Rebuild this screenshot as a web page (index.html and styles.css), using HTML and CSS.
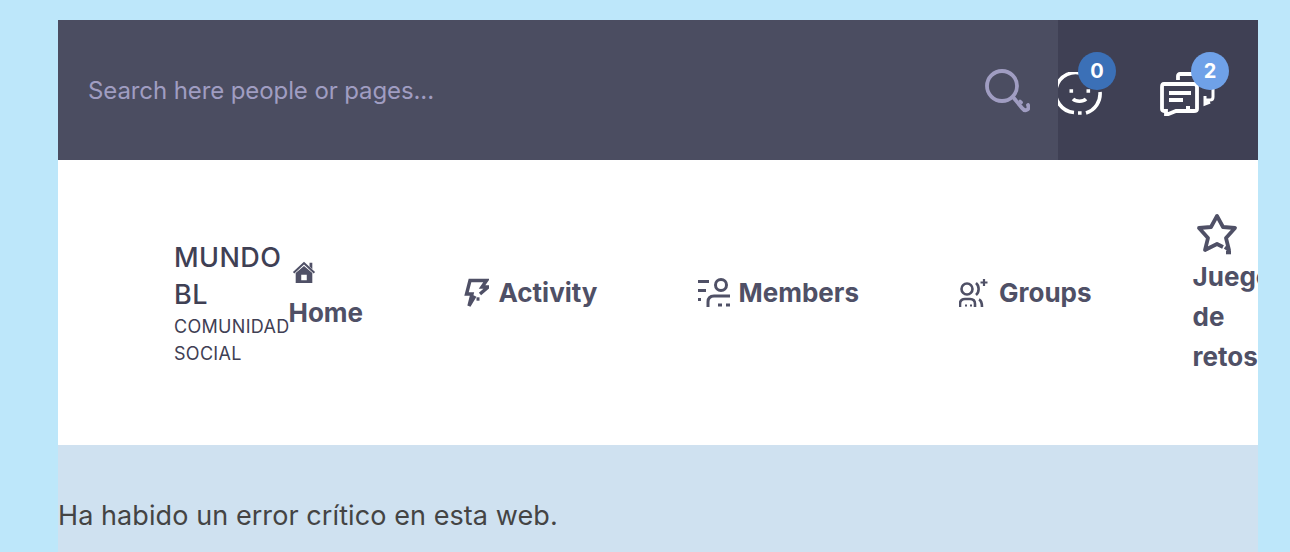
FILE: index.html
```html
<!doctype html>
<html>
<head>
<meta charset="UTF-8">
<title>Mundo BL</title>
<link rel="stylesheet" href="styles.css">
</head>

<body>
<div class="page">
  <header class="topbar">
    <div class="search">
      <span class="search-text">Search here people or pages...</span>
      <svg class="search-icon" width="45" height="46" viewBox="1 0 45 46" fill="none" stroke="#a09dc2" stroke-width="3.800" stroke-linecap="round">
        <circle cx="18" cy="17" r="15"/>
        <path d="M29 28 L38 39 C41 43 46 41 44 36"/>
        <path d="M36 32 L37.500 33.500" stroke-width="3"/>
      </svg>
    </div>
    <div class="actions">
      <div class="action action-friends">
        <svg width="44" height="44" viewBox="0 0 44 44" fill="none" stroke="#fff" stroke-width="3.600">
          <path d="M16 40.500 A20 20 0 1 1 26 2.400"/>
          <path d="M42 20 A20 20 0 0 1 28 41"/>
          <path d="M15 27 C18 30 25 30 28 27"/>
          <path d="M11.500 19 h3.600 M28.500 19 h3.600 M20 41 h3.600"/>
        </svg>
        <span class="badge badge-dark">0</span>
      </div>
      <div class="action action-chat">
        <svg width="56" height="44" viewBox="0 0 56 44" fill="none" stroke="#fff" stroke-width="3.800">
          <path d="M18 8 V4 Q18 2 20 2 H34"/>
          <path d="M53 16 V25 Q53 28 50 28 H46 M45 24 V32 L50 30" stroke-width="3"/>
          <path d="M4 12 H34 Q37 12 37 15 V37 Q37 39 34 39 H16 L6 43 V39 H4 Q2 39 2 37 V15 Q2 12 4 12 Z" fill="#3f4054"/>
          <path d="M9 21 H31 M9 28 H23 M26 36 H30"/>
        </svg>
        <span class="badge badge-light">2</span>
      </div>
    </div>
  </header>

  <nav class="navbar">
    <div class="logo">
      <div class="logo-name">MUNDO BL</div>
      <div class="logo-sub">COMUNIDAD SOCIAL</div>
    </div>
    <ul class="menu">
      <li class="menu-item item-home">
        <svg class="home-icon" width="24" height="24" viewBox="0 0 26 26" fill="#4f5066">
          <path d="M13 2 L25 13 L23.500 14.500 L13 5 L2.500 14.500 L1 13 Z"/>
          <path d="M19 3 H22 V10 L19 7 Z"/>
          <path fill-rule="evenodd" d="M4 14 L13 6.500 L22 14 V25 H4 Z M10 16 V22 H16 V16 Z"/>
        </svg>
        <span>Home</span>
      </li>
      <li class="menu-item">
        <svg width="25" height="30" viewBox="0 0 25 30" fill="none" stroke="#4f5066" stroke-width="3.400">
          <path d="M16 2.500 H6 L2.500 16 H8 L5 28 L11 18"/>
          <path d="M16 2.500 H22.500 L18 9 H24 L16 16"/>
          <path d="M12.500 21 h3" />
        </svg>
        <span>Activity</span>
      </li>
      <li class="menu-item">
        <svg width="32" height="30" viewBox="1 0 32 30" fill="none" stroke="#4f5066" stroke-width="3">
          <path d="M1 3.500 H12 M1 12.500 H9 M1 21.500 H4"/>
          <circle cx="24" cy="7" r="5.500"/>
          <path d="M11 29 V24 Q11 18 17 18 H33"/>
          <path d="M21 27 h4 M29 27 h4"/>
        </svg>
        <span>Members</span>
      </li>
      <li class="menu-item item-groups">
        <svg width="30" height="32" viewBox="2 0 30 32" fill="none" stroke="#4f5066" stroke-width="2.600">
          <circle cx="10" cy="12" r="5.500"/>
          <path d="M19 6 C22.500 9 22.500 15 19 18"/>
          <path d="M27 2 V9 M23.500 5.500 H30.500" stroke-width="2.200"/>
          <path d="M3 30 V27 Q3 22 8 22 H13 Q18 22 18 27 V30"/>
          <path d="M22 22.500 Q25 24 25 30"/>
          <path d="M8 28.500 h2 M13 28.500 h2" stroke-width="2"/>
        </svg>
        <span>Groups</span>
      </li>
      <li class="menu-item item-games">
        <svg class="star-icon" width="44" height="42" viewBox="0 0 44 42" fill="none" stroke="#4f5066" stroke-width="3.800" stroke-linejoin="round">
          <path d="M29 34 L33 37 L30 25 L39 15 L27 14 L21 3 L15 14 L3 15 L12 25 L9 37 L21 31 L27 34"/>
          <path d="M30 39.500 h5" stroke-width="3.600"/>
        </svg>
        <span>Juegos de retos</span>
      </li>
    </ul>
  </nav>

  <main class="content">
    <p class="error-text">Ha habido un error crítico en esta web.</p>
  </main>
</div>
</body>
</html>
```

FILE: styles.css
```css
html, body {
  height: 100%;
  margin: 0;
}

body {
  background-color: #bde7fa;
  font-family: "Inter", "Liberation Sans", sans-serif;
  overflow: hidden;
}

.page {
  width: 1200px;
  margin: 20px 0 0 58px;
}

/* Top bar */
.topbar {
  display: flex;
  height: 140px;
  background-color: #4b4d61;
}

.search {
  flex: 1;
  display: flex;
  align-items: center;
  justify-content: space-between;
  padding: 0 28px 0 30px;
}

.search-text {
  font-size: 24px;
  letter-spacing: -0.1px;
  color: #a09dc2;
}

.search-icon {
  margin-top: 3px;
}

.actions {
  width: 200px;
  display: flex;
  background-color: #3f4054;
}

.action {
  position: relative;
  height: 44px;
  margin-top: 52px;
}

.action svg {
  display: block;
}

.action-chat {
  margin-left: 58px;
}

.badge {
  position: absolute;
  top: -20px;
  width: 38px;
  height: 38px;
  line-height: 38px;
  border-radius: 50%;
  text-align: center;
  color: #fff;
  font-size: 20px;
  font-weight: 700;
}

.action-friends .badge {
  left: 20px;
}

.action-chat .badge {
  left: 31px;
}

.badge-dark {
  background-color: #3b70b7;
}

.badge-light {
  background-color: #6fa1e8;
}

/* Navigation */
.navbar {
  display: flex;
  align-items: center;
  height: 265px;
  padding: 0 0 20px 116px;
  background-color: #fff;
  overflow: hidden;
}

.logo {
  flex: 0 0 115px;
  margin-top: 21px;
  color: #3f4054;
}

.logo-name {
  font-size: 27px;
  font-weight: 500;
  letter-spacing: 0.4px;
  line-height: 37px;
}

.logo-sub {
  font-size: 18px;
  letter-spacing: 0.3px;
  line-height: 27px;
}

.menu {
  display: flex;
  align-items: center;
  gap: 100px;
  margin: 0;
  padding: 0;
  list-style: none;
}

.menu-item {
  flex-shrink: 0;
  display: flex;
  align-items: center;
  gap: 9px;
  color: #4f5066;
  font-size: 26px;
  font-weight: 700;
  line-height: 40px;
}

.item-groups {
  gap: 10px;
}

.item-home {
  display: block;
  width: 76px;
  margin: 8px 0 0 -1px;
}

.item-games {
  display: block;
  width: 88px;
  margin: 5px 0 0 1px;
}

.home-icon, .star-icon {
  display: block;
}

.home-icon {
  margin: 0 0 9px 4px;
}

.star-icon {
  margin: 0 0 2px 3px;
}

/* Content */
.content {
  height: 107px;
  background-color: #cfe1f0;
  overflow: hidden;
}

.error-text {
  margin: 53px 0 0;
  color: #444;
  font-size: 27px;
  letter-spacing: 0.08px;
  line-height: 36px;
}
```
